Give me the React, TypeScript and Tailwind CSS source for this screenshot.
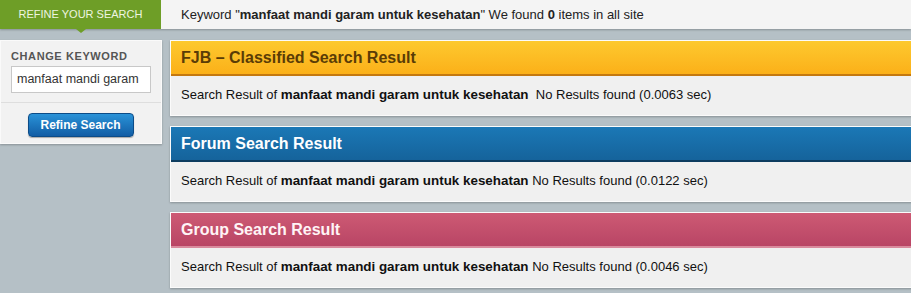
const KEYWORD = "manfaat mandi garam untuk kesehatan";

type Section = {
  title: string;
  head: string;
  time: string;
  gap: string;
};

const sections: Section[] = [
  {
    title: "FJB – Classified Search Result",
    head: "bg-gradient-to-b from-[#fdc92e] to-[#fbb018] border-b-2 border-[#c4780f] text-[#5a3c06]",
    time: "0.0063",
    gap: "\u00a0\u00a0",
  },
  {
    title: "Forum Search Result",
    head: "bg-gradient-to-b from-[#1b78b6] to-[#15639b] border-b-2 border-[#0d3c5f] text-white",
    time: "0.0122",
    gap: " ",
  },
  {
    title: "Group Search Result",
    head: "bg-gradient-to-b from-[#cd5a74] to-[#b94565] border-b-2 border-[#d98a9d] text-[#fff4f6]",
    time: "0.0046",
    gap: " ",
  },
];

function ResultBox({ s }: { s: Section }) {
  return (
    <div className="border border-[#fbfbfb] shadow-[0_1px_2px_rgba(0,0,0,0.25)]">
      <div className={`h-[35px] flex items-center pl-[10px] text-[16px] font-bold ${s.head}`}>{s.title}</div>
      <div className="h-[39px] flex items-center pl-[10px] bg-[#f0f0f0] text-[13px] text-[#111]">
        <span>
          Search Result of <b className="font-bold text-[13.4px]">{KEYWORD}</b>
          {s.gap}No Results found ({s.time} sec)
        </span>
      </div>
    </div>
  );
}

export default function App() {
  return (
    <div className="h-[293px] w-full overflow-hidden bg-[#b5c0c6] font-['Liberation_Sans',Arial,sans-serif]">
      <div className="flex h-[29px] shadow-[0_1px_2px_rgba(0,0,0,0.25)] relative z-10">
        <div className="relative w-[161px] shrink-0 bg-[#6e9e27] flex items-center justify-center text-[11px] text-[#eef5e0]">
          REFINE YOUR SEARCH
          <span className="absolute left-[76px] top-[29px] w-0 h-0 border-l-[5px] border-r-[5px] border-t-[4px] border-l-transparent border-r-transparent border-t-[#6e9e27]" />
        </div>
        <div className="flex-1 bg-[#f4f4f4] flex items-center pl-[20px] text-[13px] text-[#222]">
          <span>
            Keyword "<b>{KEYWORD}</b>" We found <b>0</b> items in all site
          </span>
        </div>
      </div>

      <div className="flex pt-[11px]">
        <div className="w-[162px] shrink-0 self-start bg-[#f2f2f2] border border-[#fafafa] shadow-[0_1px_2px_rgba(0,0,0,0.25)] pt-[7px] pb-[6px]">
          <div className="pl-[10px] text-[11px] font-bold text-[#555] tracking-[0.6px]">CHANGE KEYWORD</div>
          <div className="px-[10px] pt-[1px]">
            <input
              readOnly
              value="manfaat mandi garam"
              className="w-[140px] h-[27px] bg-white border border-[#c8c8c8] px-[5px] text-[12.5px] text-[#333] outline-none"
            />
          </div>
          <div className="mt-[9px] border-t border-[#dedede]" />
          <div className="flex justify-center pt-[10px] pr-[1px]">
            <button className="w-[106px] h-[24px] rounded-[4px] bg-gradient-to-b from-[#2a93d8] to-[#125da5] border border-[#0c4c88] text-white text-[12px] font-bold shadow-[0_1px_1px_rgba(0,0,0,0.3)]">
              Refine Search
            </button>
          </div>
        </div>

        <div className="ml-[8px] w-[760px] shrink-0 flex flex-col gap-[10px]">
          {sections.map((s) => (
            <ResultBox key={s.title} s={s} />
          ))}
        </div>
      </div>
    </div>
  );
}
